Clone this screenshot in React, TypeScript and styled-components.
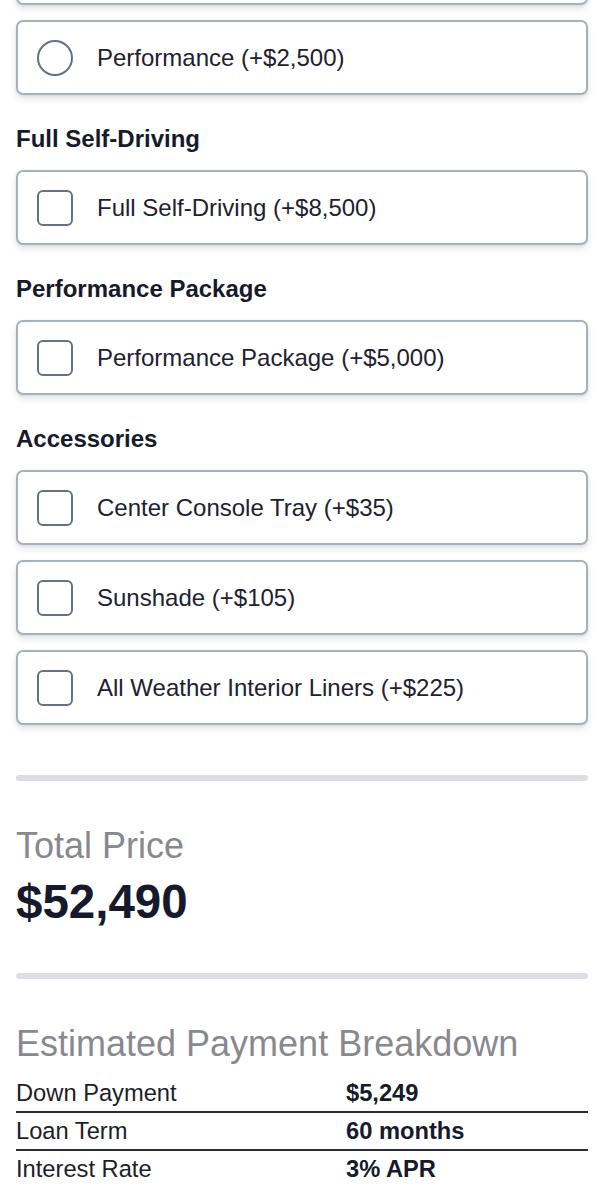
import React from 'react';
import styled, {createGlobalStyle} from 'styled-components';

type Option = {label?: string; price?: string};

type Group = {
  title?: string;
  kind: 'radio' | 'checkbox';
  options: Option[];
};

// first radio card sits above the fold, only its bottom edge shows
const GROUPS: Group[] = [
  {
    kind: 'radio',
    options: [{}, {label: 'Performance', price: '+$2,500'}],
  },
  {
    title: 'Full Self-Driving',
    kind: 'checkbox',
    options: [{label: 'Full Self-Driving', price: '+$8,500'}],
  },
  {
    title: 'Performance Package',
    kind: 'checkbox',
    options: [{label: 'Performance Package', price: '+$5,000'}],
  },
  {
    title: 'Accessories',
    kind: 'checkbox',
    options: [
      {label: 'Center Console Tray', price: '+$35'},
      {label: 'Sunshade', price: '+$105'},
      {label: 'All Weather Interior Liners', price: '+$225'},
    ],
  },
];

const BREAKDOWN = [
  {label: 'Down Payment', value: '$5,249'},
  {label: 'Loan Term', value: '60 months'},
  {label: 'Interest Rate', value: '3% APR'},
];

const GlobalStyle = createGlobalStyle`
  html, body {
    margin: 0;
    padding: 0;
    background: #ffffff;
  }
  body {
    font-family: "Liberation Sans", Arial, Helvetica, sans-serif;
    color: #1c1f2e;
  }
`;

const App: React.FC = () => (
  <>
    <GlobalStyle />
    <Page>
      {GROUPS.map((group, gi) => (
        <Section key={gi}>
          {group.title && <GroupTitle>{group.title}</GroupTitle>}
          <OptionList>
            {group.options.map((opt, oi) => (
              <OptionCard key={oi}>
                <Marker kind={group.kind} />
                {opt.label && (
                  <OptionLabel>
                    {opt.label} ({opt.price})
                  </OptionLabel>
                )}
              </OptionCard>
            ))}
          </OptionList>
        </Section>
      ))}

      <Divider space={50} />

      <TotalBlock>
        <MutedTitle>Total Price</MutedTitle>
        <TotalValue>$52,490</TotalValue>
      </TotalBlock>

      <Divider />

      <BreakdownBlock>
        <MutedTitle>Estimated Payment Breakdown</MutedTitle>
        <BreakdownTable>
          {BREAKDOWN.map(row => (
            <BreakdownRow key={row.label}>
              <RowLabel>{row.label}</RowLabel>
              <RowValue>{row.value}</RowValue>
            </BreakdownRow>
          ))}
        </BreakdownTable>
      </BreakdownBlock>
    </Page>
  </>
);

const Page = styled.main`
  display: flex;
  flex-direction: column;
  padding: 0 12px 40px 16px;
  margin-top: -70px;
`;

const Section = styled.section`
  display: flex;
  flex-direction: column;
  & + & {
    margin-top: 29px;
  }
`;

const GroupTitle = styled.h3`
  margin: 0 0 16px;
  font-size: 24px;
  line-height: 30px;
  font-weight: 700;
  color: #171a2b;
`;

const OptionList = styled.div`
  display: flex;
  flex-direction: column;
  gap: 15px;
`;

const OptionCard = styled.label`
  display: flex;
  align-items: center;
  gap: 24px;
  height: 75px;
  box-sizing: border-box;
  padding: 0 19px;
  border: 2px solid #a9b0bd;
  border-radius: 7px;
  background: #ffffff;
  box-shadow: 0 4px 7px rgba(30, 35, 60, 0.11), 0 1px 3px rgba(30, 35, 60, 0.08);
`;

const Marker = styled.span<{kind: 'radio' | 'checkbox'}>`
  flex: none;
  width: 36px;
  height: 36px;
  box-sizing: border-box;
  border: 2.6px solid #66708a;
  border-radius: ${({kind}) => (kind === 'radio' ? '50%' : '6px')};
  background: #ffffff;
`;

const OptionLabel = styled.span`
  font-size: 24px;
  line-height: 28px;
  color: #1e2130;
`;

const Divider = styled.hr<{space?: number}>`
  flex: none;
  margin: ${({space = 0}) => space}px 0 0;
  height: 6px;
  border: 0;
  border-radius: 3px;
  background: #dcdde5;
`;

const TotalBlock = styled.div`
  display: flex;
  flex-direction: column;
  gap: 6px;
  margin: 43px 0 43px;
`;

const MutedTitle = styled.h2`
  margin: 0;
  font-size: 36px;
  line-height: 1.2;
  font-weight: 400;
  color: #88898f;
`;

const TotalValue = styled.div`
  font-size: 47.5px;
  line-height: 1.2;
  font-weight: 700;
  color: #161a2b;
`;

const BreakdownBlock = styled.div`
  display: flex;
  flex-direction: column;
  gap: 10px;
  margin-top: 43px;
`;

const BreakdownTable = styled.div`
  display: flex;
  flex-direction: column;
`;

const BreakdownRow = styled.div`
  display: grid;
  grid-template-columns: 330px 1fr;
  padding: 4px 0;
  font-size: 23.7px;
  line-height: 28px;
  border-bottom: 2px solid #2a2c38;
  &:last-child {
    border-bottom: 0;
  }
`;

const RowLabel = styled.span`
  color: #1c1e28;
`;

const RowValue = styled.span`
  font-weight: 700;
  color: #171a2b;
`;

export default App;
